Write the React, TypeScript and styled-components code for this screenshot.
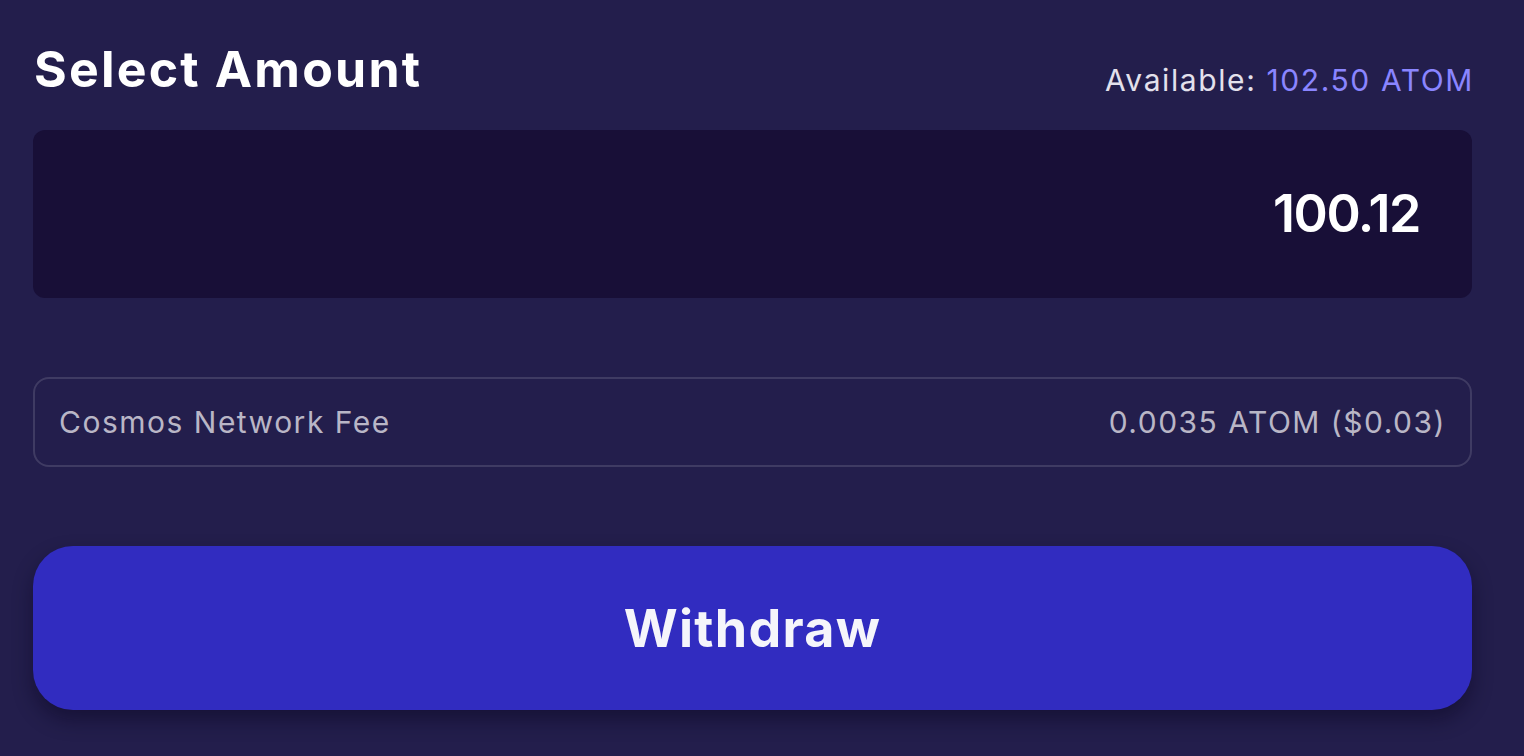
import React from "react";
import styled, { createGlobalStyle } from "styled-components";

const Global = createGlobalStyle`
  html, body {
    margin: 0;
    padding: 0;
    background: #231e4c;
  }
  body {
    font-family: Inter, "Liberation Sans", sans-serif;
    -webkit-font-smoothing: antialiased;
  }
  * { box-sizing: border-box; }
`;

const Page = styled.div`
  width: 1524px;
  height: 756px;
  padding: 0 52px 0 33px;
  background: #231e4c;
  display: flex;
  flex-direction: column;
`;

const Header = styled.div`
  height: 130px;
  display: flex;
  justify-content: space-between;
  align-items: flex-start;
`;

const Title = styled.h1`
  margin: 40px 0 0 1px;
  font-family: Inter, "Liberation Sans", sans-serif;
  font-weight: 700;
  font-size: 50px;
  line-height: 58px;
  color: #ffffff;
  letter-spacing: 2.2px;
`;

const Available = styled.div`
  margin-top: 62px;
  font-size: 30px;
  line-height: 36px;
  color: #e3e1ec;
  letter-spacing: 1.6px;
  margin-right: -2px;
`;

const Accent = styled.span`
  color: #8a85ff;
`;

const AmountBox = styled.div`
  height: 168px;
  border-radius: 12px;
  background: #180f37;
  display: flex;
  align-items: center;
  justify-content: flex-end;
  padding-right: 52px;
`;

const AmountValue = styled.span`
  font-weight: 600;
  font-size: 52px;
  line-height: 1;
  color: #ffffff;
  letter-spacing: -1.4px;
`;

const FeeRow = styled.div`
  margin-top: 79px;
  height: 90px;
  border: 2px solid rgba(255, 255, 255, 0.13);
  border-radius: 16px;
  padding: 0 24px 0 24px;
  display: flex;
  align-items: center;
  justify-content: space-between;
  font-size: 30px;
  color: #b9b6c6;
  letter-spacing: 1.5px;
`;

const WithdrawButton = styled.button`
  margin-top: 79px;
  height: 164px;
  width: 100%;
  border: none;
  border-radius: 40px;
  background: #312cc0;
  box-shadow: 0 10px 20px rgba(8, 5, 30, 0.45);
  color: #f5f5fb;
  font-family: Inter, "Liberation Sans", sans-serif;
  font-weight: 700;
  font-size: 52px;
  letter-spacing: 1.3px;
  cursor: pointer;
`;

export default function App() {
  return (
    <>
      <Global />
      <Page>
        <Header>
          <Title>Select Amount</Title>
          <Available>
            Available: <Accent>102.50 ATOM</Accent>
          </Available>
        </Header>
        <AmountBox>
          <AmountValue>100.12</AmountValue>
        </AmountBox>
        <FeeRow>
          <span>Cosmos Network Fee</span>
          <span>0.0035 ATOM ($0.03)</span>
        </FeeRow>
        <WithdrawButton>Withdraw</WithdrawButton>
      </Page>
    </>
  );
}
